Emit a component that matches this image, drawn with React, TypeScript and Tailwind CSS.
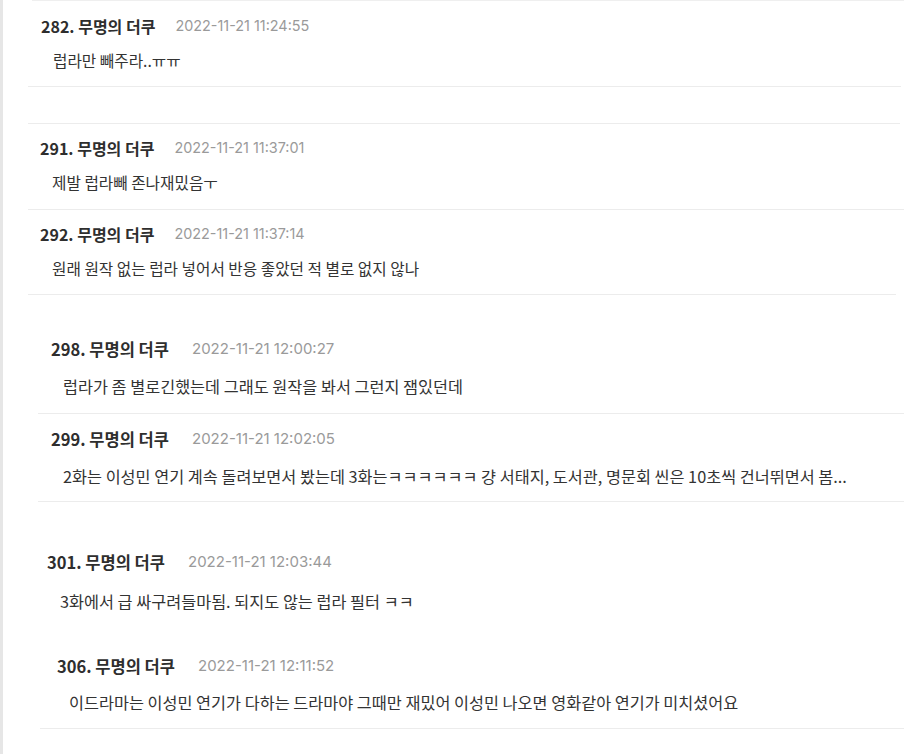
import React from "react";

type Comment = {
  no: number;
  time: string;
  body: string;
  big?: boolean;
  rowClass: string;
  headClass: string;
  bodyClass: string;
};

// each snippet was cut from a different screenshot, so offsets and sizes differ a bit
const comments: Comment[] = [
  {
    no: 282,
    time: "2022-11-21 11:24:55",
    body: "럽라만 빼주라..ㅠㅠ",
    rowClass: "ml-[25px] w-[873px] pt-[15px] pb-[15px] border-b",
    headClass: "pl-[13px]",
    bodyClass: "pl-[25px] mt-[15px]",
  },
  {
    no: 291,
    time: "2022-11-21 11:37:01",
    body: "제발 럽라빼 존나재밌음ㅜ",
    rowClass: "ml-[25px] w-[876px] pt-[14px] pb-[16px] border-b",
    headClass: "pl-[12px]",
    bodyClass: "pl-[24px] mt-[15px]",
  },
  {
    no: 292,
    time: "2022-11-21 11:37:14",
    body: "원래 원작 없는 럽라 넣어서 반응 좋았던 적 별로 없지 않나",
    rowClass: "ml-[25px] w-[868px] pt-[14px] pb-[15px] border-b",
    headClass: "pl-[12px]",
    bodyClass: "pl-[24px] mt-[15px]",
  },
  {
    no: 298,
    time: "2022-11-21 12:00:27",
    body: "럽라가 좀 별로긴했는데 그래도 원작을 봐서 그런지 잼있던데",
    big: true,
    rowClass: "ml-[35px] w-[866px] mt-[44px] pb-[17px] border-b",
    headClass: "pl-[13px]",
    bodyClass: "pl-[25px] mt-[17px]",
  },
  {
    no: 299,
    time: "2022-11-21 12:02:05",
    body: "2화는 이성민 연기 계속 돌려보면서 봤는데 3화는ㅋㅋㅋㅋㅋㅋ 걍 서태지, 도서관, 명문회 씬은 10초씩 건너뛰면서 봄...",
    big: true,
    rowClass: "ml-[35px] w-[866px] pt-[15px] pb-[15px] border-b",
    headClass: "pl-[13px]",
    bodyClass: "pl-[25px] mt-[17px]",
  },
  {
    no: 301,
    time: "2022-11-21 12:03:44",
    body: "3화에서 급 싸구려들마됨. 되지도 않는 럽라 필터 ㅋㅋ",
    big: true,
    rowClass: "ml-[35px] w-[866px] mt-[50px]",
    headClass: "pl-[9px]",
    bodyClass: "pl-[22px] mt-[19px]",
  },
  {
    no: 306,
    time: "2022-11-21 12:11:52",
    body: "이드라마는 이성민 연기가 다하는 드라마야 그때만 재밌어 이성민 나오면 영화같아 연기가 미치셨어요",
    big: true,
    rowClass: "ml-[37px] w-[864px] mt-[45px] pb-[16px] border-b",
    headClass: "pl-[17px]",
    bodyClass: "pl-[29px] mt-[16px]",
  },
];

function CommentRow({ c }: { c: Comment }) {
  return (
    <div className={`${c.rowClass} border-[#ececec]`}>
      <div className={`${c.headClass} flex items-center h-[20px] whitespace-nowrap`}>
        <span className={`${c.big ? "text-[16.5px]" : "text-[16px]"} font-bold text-[#2e2e2e]`}>
          {c.no}. 무명의 더쿠
        </span>
        <span
          className={`${c.big ? "ml-[23px] text-[15px]" : "ml-[20px] text-[14.4px]"} text-[#9a9a9a]`}
          style={{ fontFamily: 'Inter, "Noto Sans", sans-serif' }}
        >
          {c.time}
        </span>
      </div>
      <div
        className={`${c.bodyClass} ${c.big ? "text-[16.3px]" : "text-[15.7px]"} h-[20px] leading-[20px] text-[#333] whitespace-nowrap`}
      >
        {c.body}
      </div>
    </div>
  );
}

export default function App() {
  return (
    <div
      className="w-[920px] h-[754px] overflow-hidden bg-white border-l-[3px] border-[#e6e6e6]"
      style={{ fontFamily: '"Noto Sans CJK KR", "Noto Sans", sans-serif' }}
    >
      <div className="ml-[29px] w-[872px] border-t border-[#efefef]" />
      <CommentRow c={comments[0]} />
      <div className="ml-[25px] w-[872px] h-[37px] border-b border-[#ececec]" />
      {comments.slice(1).map((c) => (
        <CommentRow key={c.no} c={c} />
      ))}
    </div>
  );
}
